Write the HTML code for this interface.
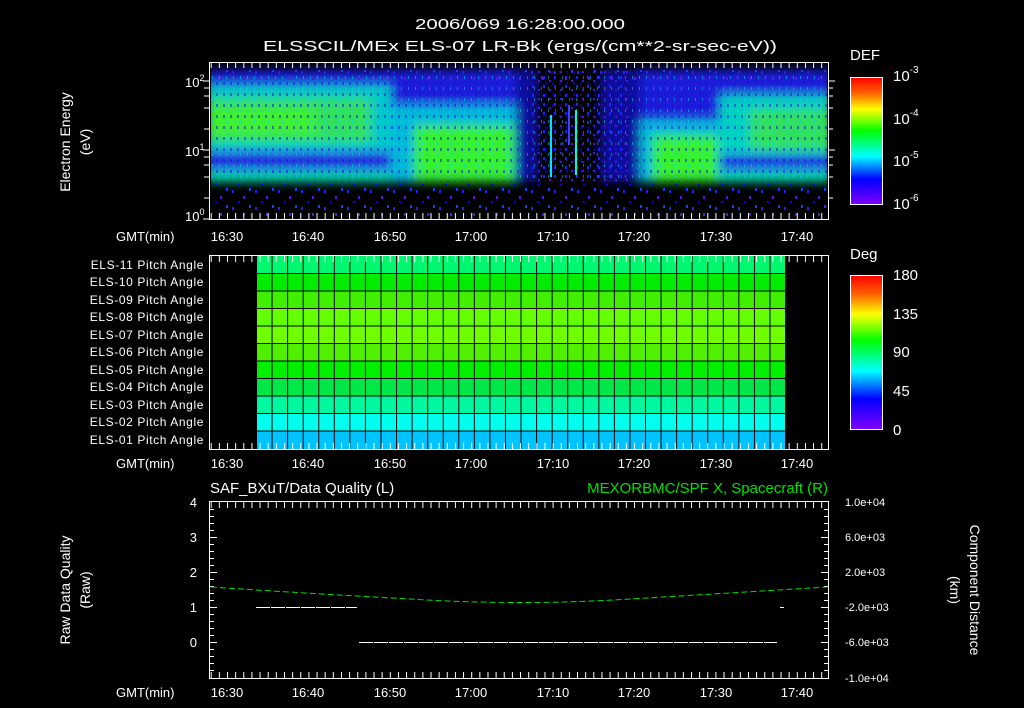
<!DOCTYPE html>
<html><head><style>
html,body{margin:0;padding:0;background:#000;width:1024px;height:708px;overflow:hidden}
svg{display:block}
text{font-family:"Liberation Sans",sans-serif;fill:#fff}
</style></head><body>
<svg width="1024" height="708" viewBox="0 0 1024 708" xmlns="http://www.w3.org/2000/svg">
<defs>
<linearGradient id="rb" x1="0" y1="0" x2="0" y2="1">
<stop offset="0" stop-color="#ff0000"/><stop offset="0.12" stop-color="#ff6000"/><stop offset="0.25" stop-color="#ffff00"/><stop offset="0.42" stop-color="#00ff00"/><stop offset="0.62" stop-color="#00ffff"/><stop offset="0.8" stop-color="#0000ff"/><stop offset="1" stop-color="#8000ff"/>
</linearGradient>
<pattern id="tkT" x="227" y="0" width="8.14" height="708" patternUnits="userSpaceOnUse"><rect x="0" y="0" width="1" height="708" fill="#fff"/></pattern>
<pattern id="spk" x="0" y="0" width="23" height="17" patternUnits="userSpaceOnUse">
<rect x="2" y="3" width="2" height="3" fill="#2020ff"/><rect x="13" y="9" width="2" height="3" fill="#6010e0"/><rect x="8" y="14" width="2" height="2" fill="#0000ff"/><rect x="19" y="1" width="2" height="3" fill="#1040ff"/>
</pattern>
<pattern id="spk3" x="3" y="2" width="11" height="9" patternUnits="userSpaceOnUse">
<rect x="1" y="2" width="2" height="3" fill="#2020ff"/><rect x="7" y="6" width="2" height="2" fill="#5010e0"/>
</pattern>
<pattern id="spk2" x="5" y="3" width="7" height="11" patternUnits="userSpaceOnUse">
<rect x="1" y="2" width="2" height="3" fill="#1010e0" opacity="0.5"/><rect x="4" y="7" width="1" height="3" fill="#00e0ff" opacity="0.5"/>
</pattern>
<filter id="bl" x="-10%" y="-30%" width="120%" height="160%"><feGaussianBlur stdDeviation="5 5"/></filter>
<clipPath id="c1"><rect x="211" y="63" width="616" height="155"/></clipPath>
<pattern id="col" x="256" y="0" width="15.56" height="10" patternUnits="userSpaceOnUse"><rect x="0" y="0" width="1" height="10" fill="#000"/></pattern>
</defs>

<text x="520" y="29" font-size="15" text-anchor="middle" textLength="210" lengthAdjust="spacingAndGlyphs">2006/069 16:28:00.000</text>
<text x="520" y="51" font-size="15" text-anchor="middle" textLength="514" lengthAdjust="spacingAndGlyphs">ELSSCIL/MEx ELS-07 LR-Bk  (ergs/(cm**2-sr-sec-eV))</text>

<!-- Panel 1 -->
<g clip-path="url(#c1)">
<g filter="url(#bl)">
<rect x="206" y="70" width="310" height="112" fill="#1a1ad8"/>
<rect x="206" y="85" width="185" height="70" fill="#00c8c8"/>
<rect x="206" y="98" width="165" height="44" fill="#30e060"/>
<rect x="206" y="108" width="110" height="28" fill="#40f030"/>
<rect x="206" y="152" width="185" height="16" fill="#2020e0"/>
<rect x="206" y="170" width="185" height="12" fill="#00d8b0"/>
<rect x="391" y="105" width="125" height="77" fill="#00b8d8"/>
<rect x="414" y="125" width="100" height="57" fill="#38f030"/>
<rect x="640" y="70" width="192" height="112" fill="#1a1ad8"/>
<rect x="640" y="120" width="80" height="62" fill="#00b8d8"/>
<rect x="652" y="135" width="66" height="47" fill="#38f030"/>
<rect x="720" y="95" width="112" height="62" fill="#00d0c0"/>
<rect x="750" y="110" width="82" height="40" fill="#30e060"/>
<rect x="720" y="155" width="112" height="14" fill="#2020e0"/>
<rect x="720" y="170" width="112" height="12" fill="#00d8b0"/>
<rect x="516" y="70" width="22" height="112" fill="#101098"/>
<rect x="600" y="70" width="40" height="112" fill="#101098"/>
</g>
<rect x="211" y="70" width="616" height="112" fill="url(#spk2)"/>
<rect x="211" y="182" width="616" height="36" fill="url(#spk)"/>
<rect x="530" y="70" width="100" height="112" fill="url(#spk3)"/>
<rect x="211" y="70" width="616" height="12" fill="url(#spk)"/>
<rect x="550" y="115" width="2" height="62" fill="#00e0ff"/>
<rect x="575" y="110" width="2" height="65" fill="#00ffd0"/>
<rect x="568" y="105" width="2" height="40" fill="#4040ff"/>
</g>
<rect x="209.5" y="62.5" width="619" height="157" fill="none" stroke="#fff"/>
<rect x="209" y="63" width="620" height="5" fill="url(#tkT)"/>
<rect x="209" y="213" width="620" height="6" fill="url(#tkT)"/>
<g stroke="#fff">
<path d="M203 81h7M203 150h7M203 219h7M204 88h6M204 96h6M204 108h6M204 129h6M204 157h6M204 165h6M204 177h6M204 198h6"/>
<path d="M828 81h7M828 150h7M828 88h5M828 96h5M828 108h5M828 129h5M828 157h5M828 165h5M828 177h5M828 198h5"/>
</g>
<text x="185" y="87" font-size="13">10<tspan dy="-6" font-size="9">2</tspan></text>
<text x="185" y="156" font-size="13">10<tspan dy="-6" font-size="9">1</tspan></text>
<text x="185" y="221" font-size="13">10<tspan dy="-6" font-size="9">0</tspan></text>
<text transform="translate(70,142) rotate(-90)" font-size="14" text-anchor="middle">Electron Energy</text>
<text transform="translate(90,142) rotate(-90)" font-size="14" text-anchor="middle">(eV)</text>

<g font-size="13" text-anchor="middle">
<text x="116" y="241" text-anchor="start">GMT(min)</text>
<text x="227" y="241">16:30</text><text x="308" y="241">16:40</text><text x="390" y="241">16:50</text><text x="471" y="241">17:00</text><text x="553" y="241">17:10</text><text x="634" y="241">17:20</text><text x="716" y="241">17:30</text><text x="797" y="241">17:40</text>
<text x="116" y="468" text-anchor="start">GMT(min)</text>
<text x="227" y="468">16:30</text><text x="308" y="468">16:40</text><text x="390" y="468">16:50</text><text x="471" y="468">17:00</text><text x="553" y="468">17:10</text><text x="634" y="468">17:20</text><text x="716" y="468">17:30</text><text x="797" y="468">17:40</text>
<text x="116" y="697" text-anchor="start">GMT(min)</text>
<text x="227" y="697">16:30</text><text x="308" y="697">16:40</text><text x="390" y="697">16:50</text><text x="471" y="697">17:00</text><text x="553" y="697">17:10</text><text x="634" y="697">17:20</text><text x="716" y="697">17:30</text><text x="797" y="697">17:40</text>
</g>

<!-- colorbar 1 -->
<text x="850" y="60" font-size="15">DEF</text>
<rect x="850.5" y="77.5" width="32" height="127" fill="url(#rb)" stroke="#fff"/>
<g font-size="15"><text x="893" y="81">10<tspan dy="-8" font-size="10">-3</tspan></text><text x="893" y="124">10<tspan dy="-8" font-size="10">-4</tspan></text><text x="893" y="166">10<tspan dy="-8" font-size="10">-5</tspan></text><text x="893" y="209">10<tspan dy="-8" font-size="10">-6</tspan></text></g>

<!-- Panel 2 -->
<g>
<rect x="256" y="256" width="529" height="18" fill="#00f870"/>
<rect x="256" y="273" width="529" height="18" fill="#00ec00"/>
<rect x="256" y="291" width="529" height="18" fill="#40f000"/>
<rect x="256" y="308" width="529" height="18" fill="#64ff00"/>
<rect x="256" y="326" width="529" height="18" fill="#70ff00"/>
<rect x="256" y="343" width="529" height="18" fill="#50f000"/>
<rect x="256" y="361" width="529" height="18" fill="#00f000"/>
<rect x="256" y="378" width="529" height="18" fill="#00e848"/>
<rect x="256" y="396" width="529" height="18" fill="#00f8a0"/>
<rect x="256" y="413" width="529" height="18" fill="#00ffee"/>
<rect x="256" y="431" width="529" height="18" fill="#00c4ff"/>
</g>
<g stroke="#000" stroke-width="1">
<path d="M256 273.5h529M256 291h529M256 308.5h529M256 326h529M256 343.5h529M256 361h529M256 378.5h529M256 396h529M256 413.5h529M256 431h529"/>
</g>
<rect x="256" y="256" width="530" height="193" fill="url(#col)"/>
<rect x="209.5" y="255.5" width="619" height="194" fill="none" stroke="#fff"/>
<rect x="209" y="256" width="620" height="6" fill="url(#tkT)"/>
<rect x="209" y="443" width="620" height="6" fill="url(#tkT)"/>
<g font-size="12" text-anchor="end" letter-spacing="0.6">
<text x="204" y="269">ELS-11 Pitch Angle</text><text x="204" y="286">ELS-10 Pitch Angle</text><text x="204" y="304">ELS-09 Pitch Angle</text><text x="204" y="321">ELS-08 Pitch Angle</text><text x="204" y="339">ELS-07 Pitch Angle</text><text x="204" y="356">ELS-06 Pitch Angle</text><text x="204" y="374">ELS-05 Pitch Angle</text><text x="204" y="391">ELS-04 Pitch Angle</text><text x="204" y="409">ELS-03 Pitch Angle</text><text x="204" y="426">ELS-02 Pitch Angle</text><text x="204" y="444">ELS-01 Pitch Angle</text>
</g>
<text x="850" y="259" font-size="15">Deg</text>
<rect x="850.5" y="275.5" width="32" height="154" fill="url(#rb)" stroke="#fff"/>
<g font-size="15"><text x="893" y="280">180</text><text x="893" y="319">135</text><text x="893" y="357">90</text><text x="893" y="396">45</text><text x="893" y="435">0</text></g>

<!-- Panel 3 -->
<text x="210" y="493" font-size="15">SAF_BXuT/Data Quality (L)</text>
<text x="828" y="493" font-size="15" text-anchor="end" style="fill:#00e000">MEXORBMC/SPF X, Spacecraft (R)</text>
<rect x="209.5" y="501.5" width="619" height="177" fill="none" stroke="#fff"/>
<rect x="209" y="502" width="620" height="6" fill="url(#tkT)"/>
<rect x="209" y="672" width="620" height="6" fill="url(#tkT)"/>
<g stroke="#fff">
<path d="M210 537.5h7M210 572.5h7M210 607.5h7M210 642.5h7M210 509.5h4M210 516.5h4M210 523.5h4M210 530.5h4M210 544.5h4M210 551.5h4M210 558.5h4M210 565.5h4M210 579.5h4M210 586.5h4M210 593.5h4M210 600.5h4M210 614.5h4M210 621.5h4M210 628.5h4M210 635.5h4M210 649.5h4M210 656.5h4M210 663.5h4M210 670.5h4"/>
<path d="M821 537.5h7M821 572.5h7M821 607.5h7M821 642.5h7M824 509.5h4M824 516.5h4M824 523.5h4M824 530.5h4M824 544.5h4M824 551.5h4M824 558.5h4M824 565.5h4M824 579.5h4M824 586.5h4M824 593.5h4M824 600.5h4M824 614.5h4M824 621.5h4M824 628.5h4M824 635.5h4M824 649.5h4M824 656.5h4M824 663.5h4M824 670.5h4"/>
<path d="M256 607.5h101M359 642.5h418M780 607.5h4" stroke-dasharray="14 1"/>
</g>
<path d="M211 587 Q300 593 410 599 Q520 606 630 599 Q730 593 827 587" fill="none" stroke="#00e000" stroke-dasharray="6 3"/>
<g font-size="13" text-anchor="end"><text x="197" y="507">4</text><text x="197" y="542">3</text><text x="197" y="577">2</text><text x="197" y="612">1</text><text x="197" y="647">0</text></g>
<g font-size="11"><text x="845" y="506">1.0e+04</text><text x="845" y="541">6.0e+03</text><text x="845" y="576">2.0e+03</text><text x="845" y="611">-2.0e+03</text><text x="845" y="646">-6.0e+03</text><text x="845" y="682">-1.0e+04</text></g>
<text transform="translate(70,590) rotate(-90)" font-size="14" text-anchor="middle">Raw Data Quality</text>
<text transform="translate(90,590) rotate(-90)" font-size="14" text-anchor="middle">(Raw)</text>
<text transform="translate(970,590) rotate(90)" font-size="14" text-anchor="middle">Component Distance</text>
<text transform="translate(950,590) rotate(90)" font-size="14" text-anchor="middle">(km)</text>
</svg>
</body></html>
